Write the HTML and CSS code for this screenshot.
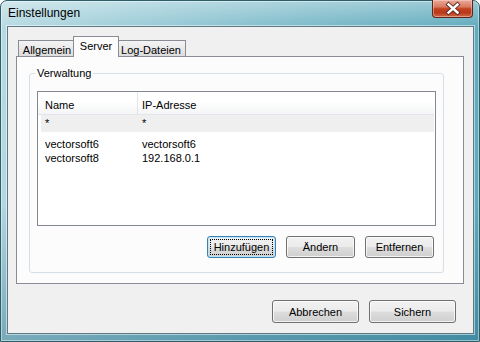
FILE: index.html
```html
<!DOCTYPE html>
<html lang="de">
<head>
  <meta charset="UTF-8">
  <title>Einstellungen</title>
  <link rel="stylesheet" href="styles.css">
</head>
<body>
  <div class="window">
    <div class="titlebar">
      <span class="title">Einstellungen</span>
      <button class="close" aria-label="Schließen">
        <svg width="40" height="17" viewBox="0 0 40 17">
          <path d="M15.5 4.5 L24.5 12.5 M24.5 4.5 L15.5 12.5" stroke="#5b2a20" stroke-width="4.2" stroke-linecap="square" fill="none"/>
          <path d="M15.5 4.5 L24.5 12.5 M24.5 4.5 L15.5 12.5" stroke="#ffffff" stroke-width="2.4" stroke-linecap="square" fill="none"/>
        </svg>
      </button>
    </div>

    <div class="client">
      <!-- Tabs -->
      <div class="tabs">
        <div class="tab tab-general">Allgemein</div>
        <div class="tab tab-server active">Server</div>
        <div class="tab tab-logs">Log-Dateien</div>
      </div>

      <div class="pane">
        <fieldset class="group">
          <legend>Verwaltung</legend>

          <div class="list">
            <div class="list-head">
              <div class="col col-name">Name</div>
              <div class="col col-ip">IP-Adresse</div>
            </div>
            <div class="list-row row-new">
              <div class="col col-name">*</div>
              <div class="col col-ip">*</div>
            </div>
            <div class="list-body">
              <div class="list-row">
                <div class="col col-name">vectorsoft6</div>
                <div class="col col-ip">vectorsoft6</div>
              </div>
              <div class="list-row">
                <div class="col col-name">vectorsoft8</div>
                <div class="col col-ip">192.168.0.1</div>
              </div>
            </div>
          </div>

          <div class="group-buttons">
            <button class="btn btn-small focused"><span>Hinzufügen</span></button>
            <button class="btn btn-small">Ändern</button>
            <button class="btn btn-small">Entfernen</button>
          </div>
        </fieldset>
      </div>

      <!-- Dialog buttons -->
      <div class="footer">
        <button class="btn btn-large">Abbrechen</button>
        <button class="btn btn-large">Sichern</button>
      </div>
    </div>
  </div>
</body>
</html>
```

FILE: styles.css
```css
html, body {
  margin: 0;
  padding: 0;
}
body {
  width: 480px;
  height: 342px;
  overflow: hidden;
  font-family: "Liberation Sans", Arial, sans-serif;
  font-size: 11px;
  color: #000;
  background: #ffffff;
}
.window {
  box-sizing: border-box;
  width: 480px;
  height: 342px;
  display: flex;
  flex-direction: column;
  padding: 0 5px 7px 6px;
  border: 1px solid #2f5e6b;
  border-radius: 7px 7px 0 0;
  background:
    linear-gradient(180deg, rgba(255, 255, 255, 0.35) 0px, rgba(255, 255, 255, 0) 26px),
    linear-gradient(180deg, rgba(0, 0, 0, 0) 60%, rgba(20, 90, 120, 0.35) 100%),
    linear-gradient(100deg, #b9dbe3 0%, #98cad6 30%, #7ab9c8 60%, #5aa7ba 100%);
  box-shadow: inset 0 0 0 1px rgba(255, 255, 255, 0.45);
}
.titlebar {
  height: 25px;
  display: flex;
  align-items: flex-start;
  padding-left: 1px;
}
.title {
  font-size: 12px;
  line-height: 25px;
}
.close {
  margin: -1px 1px 0 auto;
  width: 41px;
  height: 18px;
  padding: 0;
  border: 1px solid #5e2519;
  border-top: none;
  border-radius: 0 0 4px 4px;
  background: linear-gradient(180deg, #e9ab99 0%, #d97a62 40%, #c3411f 52%, #b8391b 75%, #cf6a4a 100%);
  box-shadow: inset 0 0 0 1px rgba(255, 220, 210, 0.45);
}
.close svg {
  display: block;
}
.client {
  flex: 1;
  display: flex;
  flex-direction: column;
  padding: 9px 9px 0 8px;
  background: #f0f0f0;
  border: 1px solid #5d7a83;
  box-shadow: 0 0 0 1px rgba(255, 255, 255, 0.5);
}

/* Tabs */
.tabs {
  height: 20px;
  display: flex;
  align-items: flex-end;
  padding-left: 2px;
}
.tab {
  box-sizing: border-box;
  height: 16px;
  padding-top: 2px;
  line-height: 14px;
  text-align: center;
  border: 1px solid #898c95;
  border-bottom: none;
  background: linear-gradient(180deg, #f4f4f4 0%, #e9e9e9 50%, #dcdcdc 100%);
}
.tab-general {
  width: 57px;
  border-right: none;
}
.tab-logs {
  width: 69px;
  border-left: none;
}
.tab.active {
  position: relative;
  z-index: 1;
  width: 46px;
  height: 21px;
  margin: 0 -2px -1px;
  border-left: 1px solid #898c95;
  border-right: 1px solid #898c95;
  background: #fcfcfc;
}
.pane {
  box-sizing: border-box;
  height: 228px;
  display: flex;
  flex-direction: column;
  padding: 10px 19px 10px 12px;
  border: 1px solid #898c95;
  background: #fcfcfc;
}

/* Group box */
.group {
  flex: 1;
  margin: 0;
  padding: 11px 7px 14px 7px;
  border: 1px solid #d5dfe5;
  border-radius: 3px;
  min-width: 0;
}
.group legend {
  margin-left: -2px;
  padding: 0 2px;
  line-height: 13px;
}
.list {
  box-sizing: border-box;
  height: 135px;
  border: 1px solid #828790;
  background: #ffffff;
}
.list-head {
  height: 23px;
  display: flex;
  line-height: 20px;
  padding-top: 0;
  box-sizing: border-box;
  margin-right: 1px;
  background: linear-gradient(180deg, #ffffff 0%, #ffffff 40%, #f4f5f6 100%);
  border-bottom: 1px solid #e3e5e8;
}
.list-head .col {
  padding-top: 3px;
}
.list-head .col-name {
  border-right: 1px solid #e1e3e6;
}
.col {
  white-space: nowrap;
}
.col-name {
  box-sizing: border-box;
  width: 100px;
  padding-left: 7px;
}
.col-ip {
  padding-left: 4px;
}
.list-row {
  display: flex;
  line-height: 14px;
}
.row-new {
  line-height: 17px;
  margin: 0 1px 0 3px;
  background: #efefef;
}
.row-new .col-name {
  width: 97px;
  padding-left: 4px;
}
.list-body {
  margin-top: 5px;
}
.group-buttons {
  display: flex;
  justify-content: flex-end;
  gap: 10px;
  margin-top: 10px;
  padding-right: 2px;
}

/* Buttons */
.btn {
  box-sizing: border-box;
  padding: 0;
  font-family: "Liberation Sans", Arial, sans-serif;
  font-size: 11px;
  color: #000;
  border: 1px solid #707070;
  border-radius: 3px;
  background: linear-gradient(180deg, #f2f2f2 0%, #ebebeb 48%, #dddddd 52%, #cfcfcf 100%);
  box-shadow: inset 0 0 0 1px rgba(255, 255, 255, 0.75);
}
.btn-small {
  width: 69px;
  height: 22px;
}
.btn-large {
  width: 87px;
  height: 23px;
}
.btn.focused {
  border-color: #3c7fb1;
  box-shadow: inset 0 0 0 1px rgba(180, 230, 250, 0.9);
  outline: 1px dotted #000;
  outline-offset: -4px;
}
.footer {
  display: flex;
  justify-content: flex-end;
  gap: 10px;
  margin-top: 16px;
  padding-right: 8px;
}
```
